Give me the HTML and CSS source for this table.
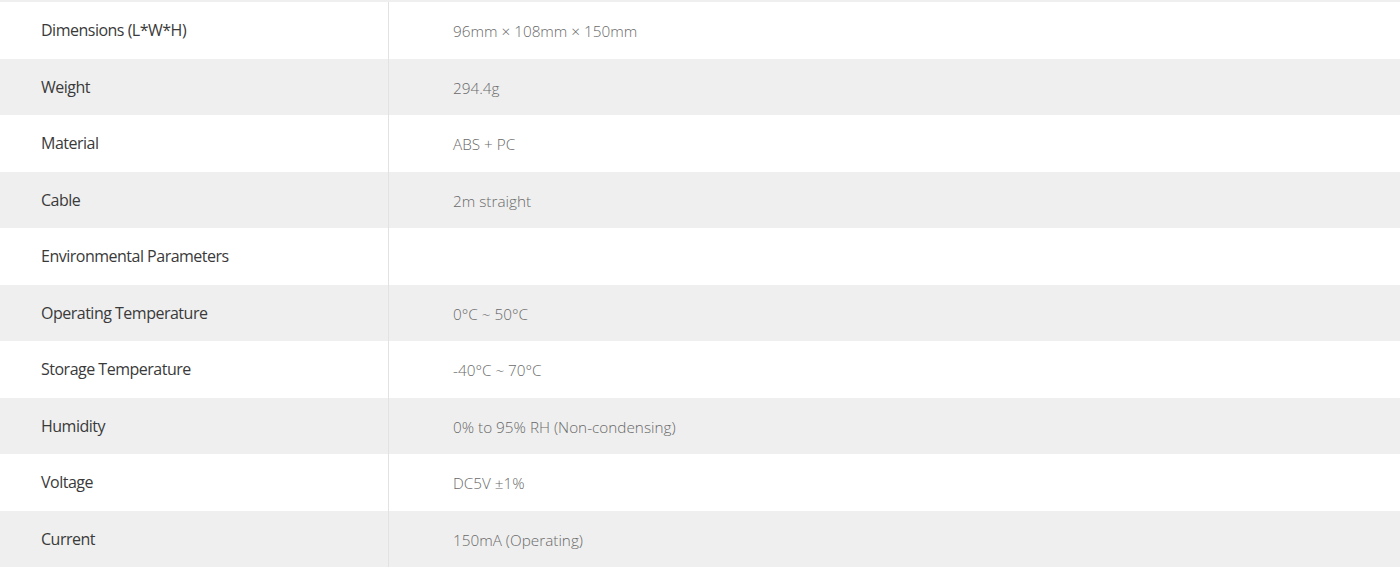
FILE: index.html
```html
<!DOCTYPE html>
<html lang="en">
<head>
    <meta charset="UTF-8">
    <meta name="viewport" content="width=device-width, initial-scale=1.0">
    <link rel="stylesheet" href="styles.css">
</head>
<body>

<!-- Spec table -->
<div class="spec-table">
    <div class="spec-edge"></div>
    <div class="spec-row">
        <div class="spec-label">Dimensions (L*W*H)</div>
        <div class="spec-value">96mm × 108mm × 150mm</div>
    </div>
    <div class="spec-row">
        <div class="spec-label">Weight</div>
        <div class="spec-value">294.4g</div>
    </div>
    <div class="spec-row">
        <div class="spec-label">Material</div>
        <div class="spec-value">ABS + PC</div>
    </div>
    <div class="spec-row">
        <div class="spec-label">Cable</div>
        <div class="spec-value">2m straight</div>
    </div>
    <div class="spec-row">
        <div class="spec-label">Environmental Parameters</div>
        <div class="spec-value"></div>
    </div>
    <div class="spec-row">
        <div class="spec-label">Operating Temperature</div>
        <div class="spec-value">0°C ~ 50°C</div>
    </div>
    <div class="spec-row">
        <div class="spec-label">Storage Temperature</div>
        <div class="spec-value">-40°C ~ 70°C</div>
    </div>
    <div class="spec-row">
        <div class="spec-label">Humidity</div>
        <div class="spec-value">0% to 95% RH (Non-condensing)</div>
    </div>
    <div class="spec-row">
        <div class="spec-label">Voltage</div>
        <div class="spec-value">DC5V ±1%</div>
    </div>
    <div class="spec-row">
        <div class="spec-label">Current</div>
        <div class="spec-value">150mA (Operating)</div>
    </div>
</div>

</body>
</html>
```

FILE: styles.css
```css
body {
    background-color: white;
    margin: 0;
    padding: 0;
    font-family: "Open Sans", Arial, sans-serif;
}

/* Spec table */
.spec-table {
    width: 1400px;
}
.spec-edge {
    height: 2px;
    background-color: #efefef;
}
.spec-row {
    display: grid;
    grid-template-columns: 389px 1fr;
    height: 56.5px;
}
.spec-row:nth-child(odd) {
    background-color: #efefef;
}
.spec-label {
    display: flex;
    align-items: center;
    padding-left: 41px;
    border-right: 1px solid #e2e2e2;
    font-size: 16px;
    letter-spacing: -0.5px;
    color: #3a3a3a;
}
.spec-value {
    display: flex;
    align-items: center;
    padding-left: 64px;
    padding-top: 2px;
    font-size: 15.3px;
    font-weight: 300;
    letter-spacing: 0;
    color: #6a6a6a;
}
```
